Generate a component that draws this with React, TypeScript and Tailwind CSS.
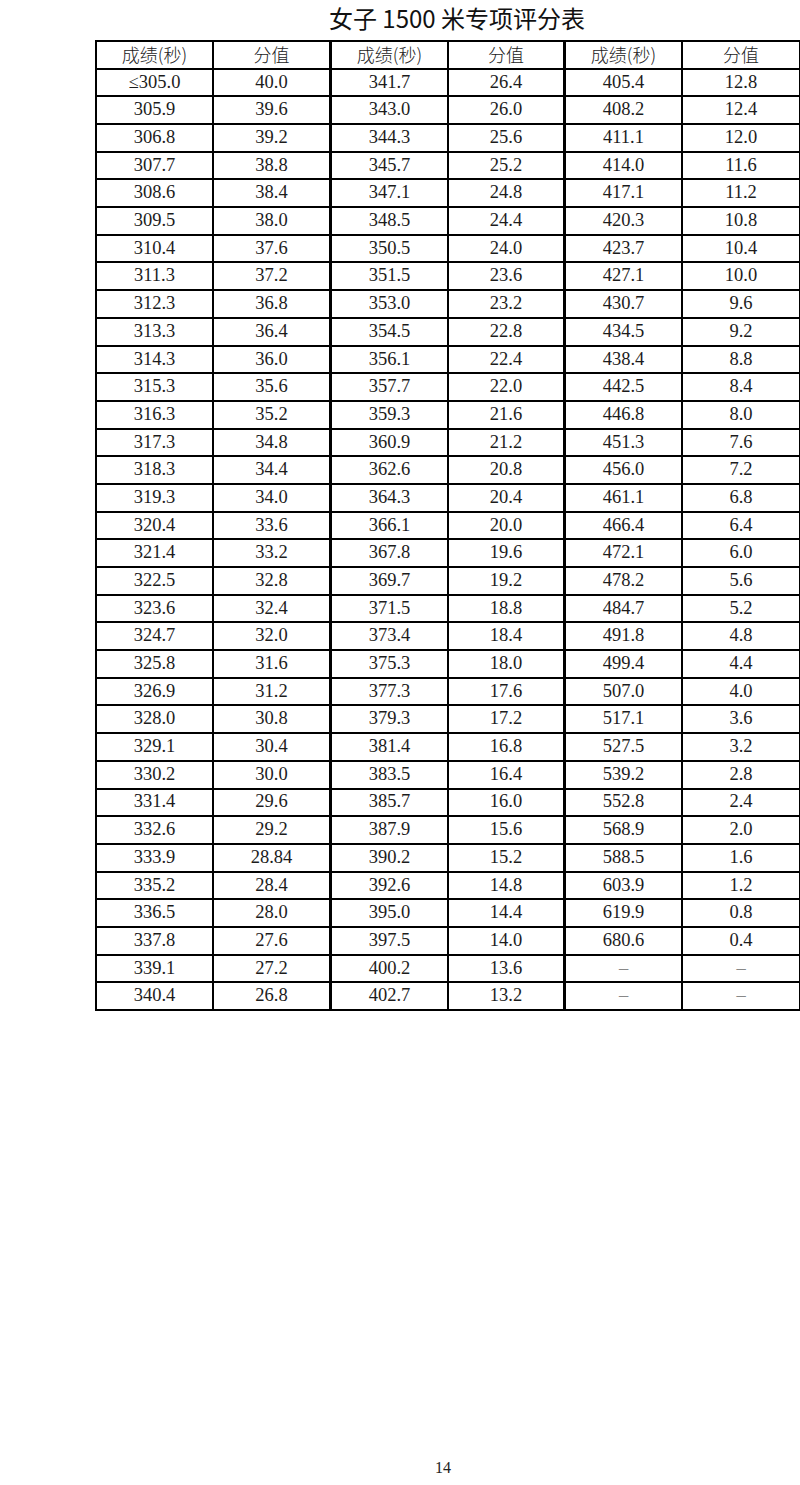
import React from "react";

const c1 = ["≤305.0","305.9","306.8","307.7","308.6","309.5","310.4","311.3","312.3","313.3","314.3","315.3","316.3","317.3","318.3","319.3","320.4","321.4","322.5","323.6","324.7","325.8","326.9","328.0","329.1","330.2","331.4","332.6","333.9","335.2","336.5","337.8","339.1","340.4"];
const c2 = ["40.0","39.6","39.2","38.8","38.4","38.0","37.6","37.2","36.8","36.4","36.0","35.6","35.2","34.8","34.4","34.0","33.6","33.2","32.8","32.4","32.0","31.6","31.2","30.8","30.4","30.0","29.6","29.2","28.84","28.4","28.0","27.6","27.2","26.8"];
const c3 = ["341.7","343.0","344.3","345.7","347.1","348.5","350.5","351.5","353.0","354.5","356.1","357.7","359.3","360.9","362.6","364.3","366.1","367.8","369.7","371.5","373.4","375.3","377.3","379.3","381.4","383.5","385.7","387.9","390.2","392.6","395.0","397.5","400.2","402.7"];
const c4 = ["26.4","26.0","25.6","25.2","24.8","24.4","24.0","23.6","23.2","22.8","22.4","22.0","21.6","21.2","20.8","20.4","20.0","19.6","19.2","18.8","18.4","18.0","17.6","17.2","16.8","16.4","16.0","15.6","15.2","14.8","14.4","14.0","13.6","13.2"];
const c5 = ["405.4","408.2","411.1","414.0","417.1","420.3","423.7","427.1","430.7","434.5","438.4","442.5","446.8","451.3","456.0","461.1","466.4","472.1","478.2","484.7","491.8","499.4","507.0","517.1","527.5","539.2","552.8","568.9","588.5","603.9","619.9","680.6","–","–"];
const c6 = ["12.8","12.4","12.0","11.6","11.2","10.8","10.4","10.0","9.6","9.2","8.8","8.4","8.0","7.6","7.2","6.8","6.4","6.0","5.6","5.2","4.8","4.4","4.0","3.6","3.2","2.8","2.4","2.0","1.6","1.2","0.8","0.4","–","–"];

const headers = ["成绩(秒)", "分值", "成绩(秒)", "分值", "成绩(秒)", "分值"];
const cols = [c1, c2, c3, c4, c5, c6];

const borderR = [
  "border-r-2",
  "border-r-[3px]",
  "border-r-2",
  "border-r-[3px]",
  "border-r-2",
  "border-r-2",
];

export default function App() {
  return (
    <div className="w-[800px] h-[1485px] overflow-hidden bg-white flex flex-col">
      <div className="h-[40px] w-[704px] ml-[96px] pl-[18px] text-center text-[24px] leading-[35px] text-[#111] font-['Noto_Sans_CJK_SC','Noto_Sans',sans-serif]">
        女子 1500 米专项评分表
      </div>
      <div className="ml-[95px] w-[708px] h-[971px] border-t-2 border-l-2 border-black grid grid-cols-[117px_118px_117px_117px_117px_118px] grid-rows-[repeat(35,minmax(0,1fr))]">
        {headers.map((h, i) => (
          <div
            key={"h" + i}
            className={`border-b-2 border-black ${borderR[i]} flex items-center justify-center text-[18px] text-[#222] font-light font-['Noto_Sans_CJK_SC',sans-serif]`}
          >
            {h}
          </div>
        ))}
        {c1.map((_, r) =>
          cols.map((col, i) => {
            const v = col[r];
            const dash = v === "–";
            return (
              <div
                key={r + "-" + i}
                className={`border-b-2 border-black ${borderR[i]} flex items-center justify-center text-[18.5px] font-['Liberation_Serif','Times_New_Roman',serif] ${dash ? "text-[#888]" : "text-[#1c1c1c]"}`}
              >
                {v}
              </div>
            );
          })
        )}
      </div>
      <div className="flex-1" />
      <div className="w-[704px] ml-[96px] pr-[10px] text-center text-[16px] leading-[20px] pb-[7px] text-[#222] font-['Liberation_Serif',serif]">
        14
      </div>
    </div>
  );
}
